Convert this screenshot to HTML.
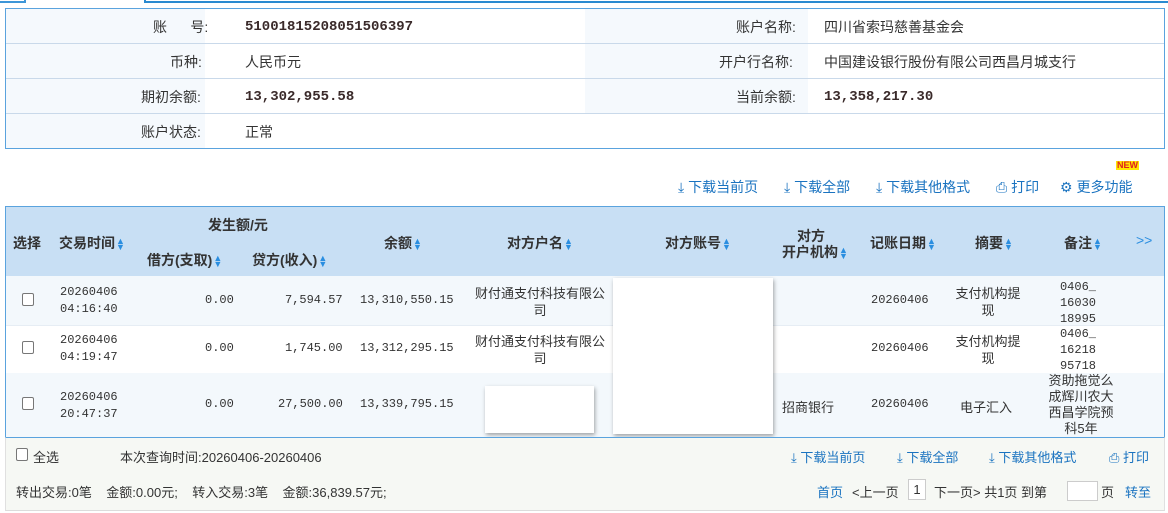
<!DOCTYPE html>
<html><head><meta charset="utf-8"><style>
*{margin:0;padding:0;box-sizing:border-box}
body{width:1168px;height:513px;background:#fff;font-family:"Liberation Sans","Noto Sans CJK SC",sans-serif;font-size:13px;color:#333;position:relative;overflow:hidden}
.a{position:absolute;white-space:nowrap}
.lb{background:#f5f9fd}
.hl{position:absolute;left:6px;width:1158px;height:1px;background:#c9d9ea}
.b{font-weight:bold;color:#3a2a2a}
.mono{font-family:"Liberation Mono","Noto Sans CJK SC",monospace}
.lnk{color:#1a73c0}
.hd{font-weight:bold;color:#333;font-size:14px}
.ar{color:#2a8ee0;font-size:9px;display:inline-block;line-height:6px;vertical-align:middle;margin-left:1px}
.cb{position:absolute;width:12px;height:13px;border:1px solid #777;border-radius:2px;background:#fff}
.c{text-align:center}
.r{text-align:right}
</style></head><body>
<div class="a" style="left:0;top:0;width:26px;height:3px;border-bottom:2px solid #3d96d8;border-right:2px solid #3d96d8"></div>
<div class="a" style="left:144px;top:0;width:1024px;height:3px;border-bottom:2px solid #2a8ad0;border-left:2px solid #2a8ad0"></div>
<div class="a" style="left:5px;top:8px;width:1160px;height:141px;border:1px solid #5aa3de"></div>
<div class="a lb" style="left:6px;top:9px;width:199px;height:139px"></div>
<div class="a lb" style="left:585px;top:9px;width:223px;height:104px"></div>
<div class="hl" style="top:43px"></div><div class="hl" style="top:78px"></div><div class="hl" style="top:113px"></div>
<div class="a" style="left:153px;top:17px;font-size:14px">账&nbsp;&nbsp;&nbsp;&nbsp;&nbsp;&nbsp;号:</div>
<div class="a b mono" style="left:245px;top:19px;font-size:14px">51001815208051506397</div>
<div class="a" style="left:170px;top:52px;font-size:14px">币种:</div>
<div class="a" style="left:245px;top:52px;font-size:14px">人民币元</div>
<div class="a" style="left:141px;top:87px;font-size:14px">期初余额:</div>
<div class="a b mono" style="left:245px;top:89px;font-size:14px">13,302,955.58</div>
<div class="a" style="left:141px;top:122px;font-size:14px">账户状态:</div>
<div class="a" style="left:245px;top:122px;font-size:14px">正常</div>
<div class="a" style="left:736px;top:17px;font-size:14px">账户名称:</div>
<div class="a" style="left:824px;top:17px;font-size:14px">四川省索玛慈善基金会</div>
<div class="a" style="left:719px;top:52px;font-size:14px">开户行名称:</div>
<div class="a" style="left:824px;top:52px;font-size:14px">中国建设银行股份有限公司西昌月城支行</div>
<div class="a" style="left:736px;top:87px;font-size:14px">当前余额:</div>
<div class="a b mono" style="left:824px;top:89px;font-size:14px">13,358,217.30</div>
<div class="a" style="left:1116px;top:161px;font-size:9px;font-weight:bold;color:#e02020;background:#ffe600;line-height:9px;padding:0 1px">NEW</div>
<div class="a lnk" style="left:678px;top:177px;font-size:14px">⤓ 下载当前页</div>
<div class="a lnk" style="left:784px;top:177px;font-size:14px">⤓ 下载全部</div>
<div class="a lnk" style="left:876px;top:177px;font-size:14px">⤓ 下载其他格式</div>
<div class="a lnk" style="left:996px;top:177px;font-size:14px">⎙ 打印</div>
<div class="a lnk" style="left:1060px;top:177px;font-size:14px">⚙ 更多功能</div>
<div class="a" style="left:5px;top:206px;width:1160px;height:70px;background:#c8dff4;border-top:1px solid #5aa3de;border-left:1px solid #5aa3de;border-right:1px solid #5aa3de"></div>
<div class="a hd" style="left:13px;top:233px">选择</div>
<div class="a hd" style="left:59px;top:233px">交易时间<span class="ar">▲<br>▼</span></div>
<div class="a hd" style="left:208px;top:215px">发生额/元</div>
<div class="a hd" style="left:147px;top:250px">借方(支取)<span class="ar">▲<br>▼</span></div>
<div class="a hd" style="left:252px;top:250px">贷方(收入)<span class="ar">▲<br>▼</span></div>
<div class="a hd" style="left:384px;top:233px">余额<span class="ar">▲<br>▼</span></div>
<div class="a hd" style="left:507px;top:233px">对方户名<span class="ar">▲<br>▼</span></div>
<div class="a hd" style="left:665px;top:233px">对方账号<span class="ar">▲<br>▼</span></div>
<div class="a hd" style="left:797px;top:226px">对方</div>
<div class="a hd" style="left:782px;top:242px">开户机构<span class="ar">▲<br>▼</span></div>
<div class="a hd" style="left:870px;top:233px">记账日期<span class="ar">▲<br>▼</span></div>
<div class="a hd" style="left:975px;top:233px">摘要<span class="ar">▲<br>▼</span></div>
<div class="a hd" style="left:1064px;top:233px">备注<span class="ar">▲<br>▼</span></div>
<div class="a" style="left:1136px;top:232px;color:#2a8ee0;font-size:14px">&gt;&gt;</div>
<div class="a" style="left:5px;top:276px;width:1160px;height:161px;border-left:1px solid #5aa3de;border-right:1px solid #5aa3de"></div>
<div class="a" style="left:6px;top:276px;width:1158px;height:49px;background:#f3f8fc"></div>
<div class="a" style="left:6px;top:373px;width:1158px;height:64px;background:#f3f8fc"></div>
<div class="a" style="left:6px;top:325px;width:1158px;height:1px;background:#e6edf4"></div>

<div class="cb" style="left:22px;top:293px"></div>
<div class="a mono c" style="left:60px;top:284px;font-size:12px;line-height:17px">20260406<br>04:16:40</div>
<div class="a mono" style="left:205px;top:293px;font-size:12px">0.00</div>
<div class="a mono" style="left:285px;top:293px;font-size:12px">7,594.57</div>
<div class="a mono" style="left:360px;top:293px;font-size:12px">13,310,550.15</div>
<div class="a c" style="left:468px;top:285px;line-height:17px;width:144px">财付通支付科技有限公<br>司</div>
<div class="a mono" style="left:871px;top:293px;font-size:12px">20260406</div>
<div class="a c" style="left:955px;top:285px;line-height:17px;width:66px">支付机构提<br>现</div>
<div class="a mono c" style="left:1058px;top:279px;line-height:16px;font-size:12px;width:40px">0406_<br>16030<br>18995</div>

<div class="cb" style="left:22px;top:341px"></div>
<div class="a mono c" style="left:60px;top:332px;font-size:12px;line-height:17px">20260406<br>04:19:47</div>
<div class="a mono" style="left:205px;top:341px;font-size:12px">0.00</div>
<div class="a mono" style="left:285px;top:341px;font-size:12px">1,745.00</div>
<div class="a mono" style="left:360px;top:341px;font-size:12px">13,312,295.15</div>
<div class="a c" style="left:468px;top:333px;line-height:17px;width:144px">财付通支付科技有限公<br>司</div>
<div class="a mono" style="left:871px;top:341px;font-size:12px">20260406</div>
<div class="a c" style="left:955px;top:333px;line-height:17px;width:66px">支付机构提<br>现</div>
<div class="a mono c" style="left:1058px;top:326px;line-height:16px;font-size:12px;width:40px">0406_<br>16218<br>95718</div>

<div class="cb" style="left:22px;top:397px"></div>
<div class="a mono c" style="left:60px;top:389px;font-size:12px;line-height:17px">20260406<br>20:47:37</div>
<div class="a mono" style="left:205px;top:397px;font-size:12px">0.00</div>
<div class="a mono" style="left:278px;top:397px;font-size:12px">27,500.00</div>
<div class="a mono" style="left:360px;top:397px;font-size:12px">13,339,795.15</div>
<div class="a" style="left:782px;top:397px">招商银行</div>
<div class="a mono" style="left:871px;top:397px;font-size:12px">20260406</div>
<div class="a" style="left:960px;top:397px">电子汇入</div>
<div class="a c" style="left:1046px;top:373px;line-height:16px;width:70px">资助拖觉么<br>成辉川农大<br>西昌学院预<br>科5年</div>

<div class="a" style="left:613px;top:278px;width:160px;height:156px;background:#fff;box-shadow:1px 2px 4px rgba(0,0,0,.35)"></div>
<div class="a" style="left:485px;top:386px;width:109px;height:47px;background:#fff;box-shadow:1px 2px 4px rgba(0,0,0,.35)"></div>
<div class="a" style="left:5px;top:437px;width:1160px;height:74px;background:#f6f8f4;border-top:1px solid #5aa3de;border-bottom:1px solid #dcdcdc;border-left:1px solid #e0e0e0;border-right:1px solid #e0e0e0"></div>
<div class="cb" style="left:16px;top:448px"></div>
<div class="a" style="left:33px;top:447px">全选</div>
<div class="a" style="left:120px;top:447px">本次查询时间:20260406-20260406</div>
<div class="a lnk" style="left:791px;top:447px">⤓ 下载当前页</div>
<div class="a lnk" style="left:897px;top:447px">⤓ 下载全部</div>
<div class="a lnk" style="left:989px;top:447px">⤓ 下载其他格式</div>
<div class="a lnk" style="left:1109px;top:447px">⎙ 打印</div>
<div class="a" style="left:16px;top:482px">转出交易:0笔&nbsp;&nbsp;&nbsp;&nbsp;金额:0.00元;&nbsp;&nbsp;&nbsp;&nbsp;转入交易:3笔&nbsp;&nbsp;&nbsp;&nbsp;金额:36,839.57元;</div>
<div class="a lnk" style="left:817px;top:482px">首页</div>
<div class="a" style="left:852px;top:482px">&lt;上一页</div>
<div class="a" style="left:908px;top:479px;width:18px;height:21px;border:1px solid #ccc;background:#fff;text-align:center;line-height:19px">1</div>
<div class="a" style="left:934px;top:482px">下一页&gt; 共1页 到第</div>
<div class="a" style="left:1067px;top:481px;width:31px;height:20px;border:1px solid #ccc;background:#fff"></div>
<div class="a" style="left:1101px;top:482px">页</div>
<div class="a lnk" style="left:1125px;top:482px">转至</div>
</body></html>
